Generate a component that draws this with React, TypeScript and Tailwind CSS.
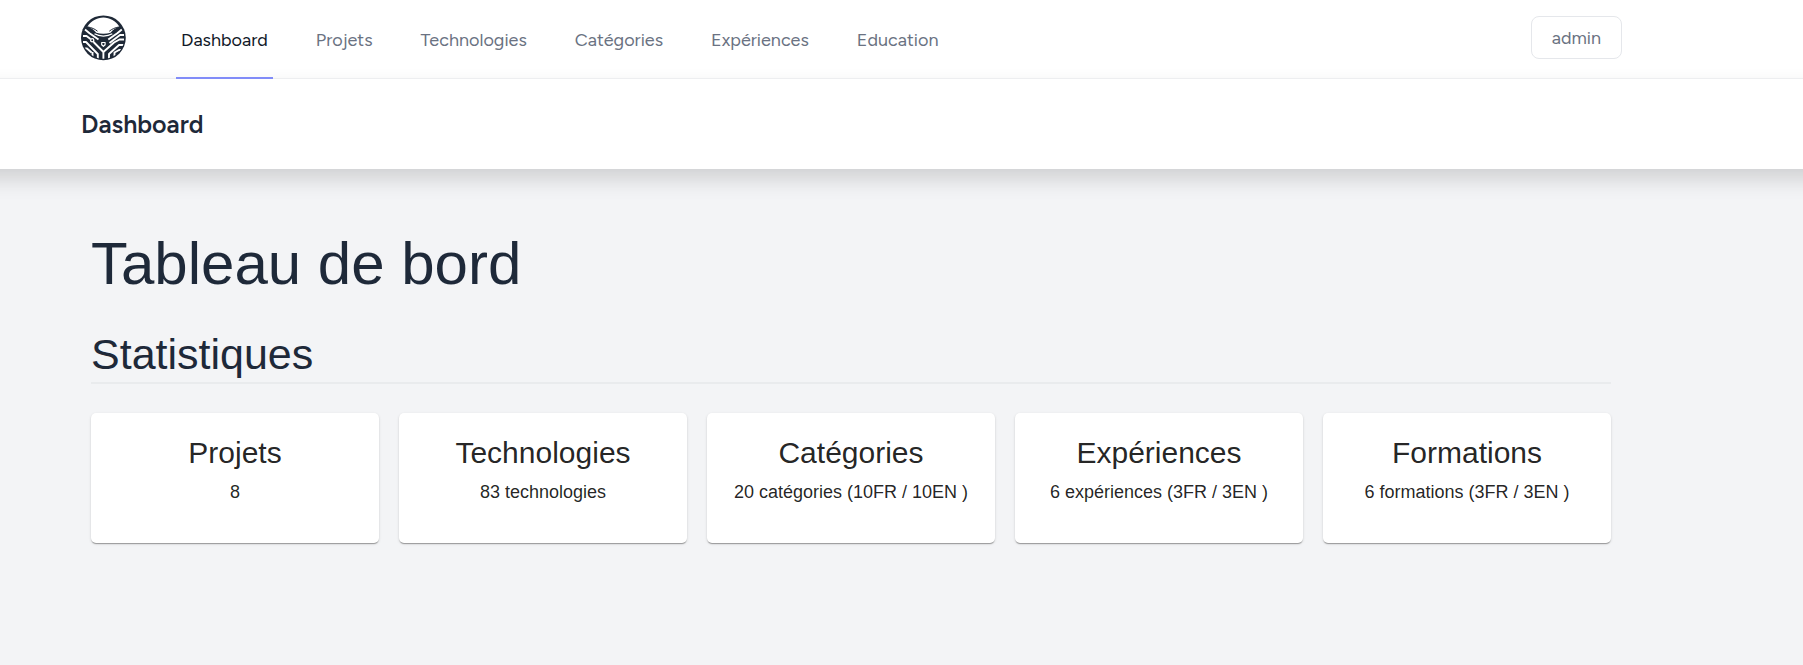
const links = ["Dashboard", "Projets", "Technologies", "Catégories", "Expériences", "Education"];

const stats = [
  { title: "Projets", value: "8" },
  { title: "Technologies", value: "83 technologies" },
  { title: "Catégories", value: "20 catégories (10FR / 10EN )" },
  { title: "Expériences", value: "6 expériences (3FR / 3EN )" },
  { title: "Formations", value: "6 formations (3FR / 3EN )" },
];

function Logo() {
  return (
    <svg viewBox="0 0 45 46" className="h-[46px] w-[45px]" fill="none" aria-hidden="true">
      <defs>
        <clipPath id="disc">
          <circle cx="22.4" cy="22.8" r="21" />
        </clipPath>
      </defs>
      <circle cx="22.4" cy="22.8" r="22.4" fill="#1f2937" />
      <path d="M6.500 11.500C10 6 16 2.500 22.400 2.500s12.400 3.500 15.900 9c-3.500 1.300-6.500 3.500-8.800 6.300-4.500 1.200-9.700 1.200-14.200 0C13 15 10 12.800 6.500 11.500Z" fill="#fff" />
      <path d="M7 12c3.500.6 7 2 9.500 4.200M37.800 12c-3.500.6-7 2-9.500 4.200" stroke="#1f2937" strokeWidth="1" />
      <g clipPath="url(#disc)" stroke="#fff" strokeWidth="1.900" strokeLinejoin="round">
        <path d="M13.500 18.800c5 3 12.800 3 17.800 0" strokeWidth="1.200" />
        <path d="M4 14.500 8.500 18.200l9 6.300M40.800 14.500l-4.500 3.700-9 6.300" />
        <path d="M2 21h3.500l4 3M43 20h-4l-10.500 8" />
        <path d="M22.400 44v-7L12.500 27M22.400 37 33 27.500l5.500-3H43" />
        <path d="M2 27h3l11.800 12V44M43 30h-5l-10 9v5" />
        <path d="M3 33.500h3l4.500 4M11.500 42v-5M42 35h-4l-4.500 2.500V42" />
        <circle cx="11.200" cy="25.300" r="1.600" fill="#1f2937" strokeWidth="1.300" />
        <path d="M20.700 27.500v2.200l1.700 1.600 1.700-1.600v-2.200Z" strokeWidth="1.200" />
      </g>
    </svg>
  );
}

export default function App() {
  return (
    <div className="min-h-screen overflow-x-clip bg-[#f3f4f6] font-['Liberation_Sans',Arial,sans-serif] text-gray-800">
      <nav className="flex h-[79px] items-stretch border-b border-gray-100 bg-white pr-[181px] pl-[81px] font-['Figtree',Lato,sans-serif] text-lg text-gray-500">
        <a href="#" aria-label="Accueil" className="mt-[15px] mr-[50px] shrink-0">
          <Logo />
        </a>
        <div className="-mb-px flex gap-[38px]">
          {links.map((link, i) => (
            <a
              key={link}
              href="#"
              className={
                i === 0
                  ? "relative flex items-center border-b-2 border-[#818cf8] px-[5px] pt-0.5 text-gray-900"
                  : "flex items-center border-b-2 border-transparent px-[5px] pt-0.5"
              }
            >
              {link}
            </a>
          ))}
        </div>
        <button type="button" className="mt-4 ml-auto h-[43px] rounded-lg border border-gray-200 px-5">
          admin
        </button>
      </nav>
      <header className="-mx-10 bg-white py-[30px] pr-[221px] pl-[121px] font-['Figtree',Lato,sans-serif] shadow-[0_10px_20px_rgba(0,0,0,0.15)]">
        <h2 className="text-[25px] leading-[30px] font-semibold">Dashboard</h2>
      </header>
      <main className="pt-[59px] pr-[192px] pl-[91px]">
        <h1 className="text-[60px] leading-[72px]">Tableau de bord</h1>
        <h2 className="mt-7 border-b-2 border-[#e9ebed] pb-0.5 text-[43px] leading-[52px]">Statistiques</h2>
        <div className="mt-[29px] grid grid-cols-5 gap-5">
          {stats.map((stat) => (
            <section
              key={stat.title}
              className="h-[130px] rounded-[5px] bg-white pt-5 text-center text-black/87 shadow-[0_2px_1px_-1px_rgba(0,0,0,0.2),0_1px_1px_rgba(0,0,0,0.14),0_1px_3px_rgba(0,0,0,0.12)]"
            >
              <h3 className="text-[30px] leading-10">{stat.title}</h3>
              <p className="mt-[7px] text-lg leading-6">{stat.value}</p>
            </section>
          ))}
        </div>
      </main>
    </div>
  );
}
